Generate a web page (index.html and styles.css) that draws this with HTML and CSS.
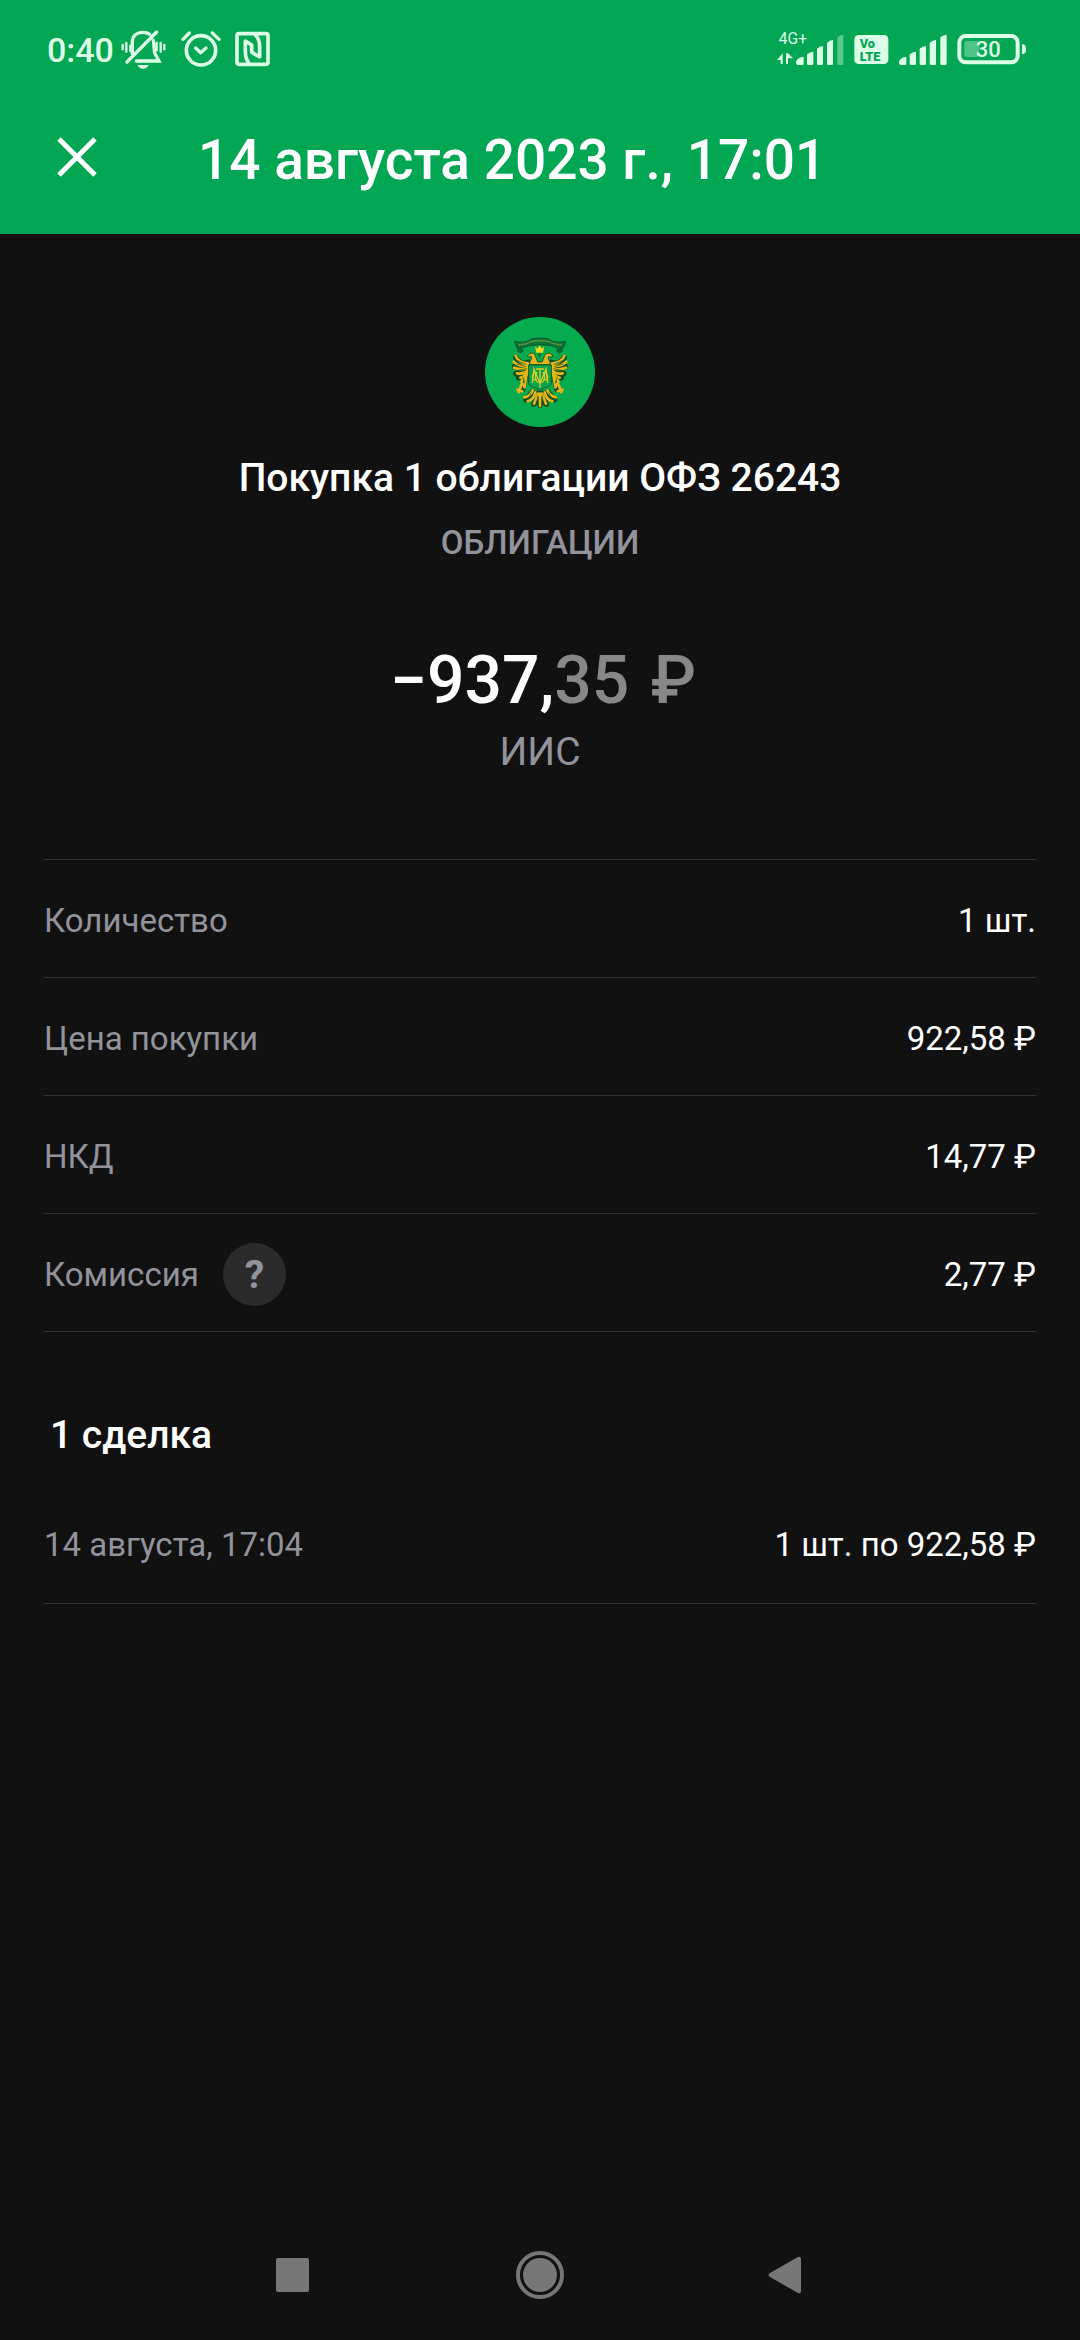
FILE: index.html
```html
<!DOCTYPE html>
<html lang="ru">
<head>
<meta charset="utf-8">
<meta name="viewport" content="width=device-width, initial-scale=1">
<title>Покупка облигации</title>
<link rel="stylesheet" href="styles.css">
</head>
<body>
<header class="top">
  <div class="status">
    <div class="status-side status-left">
      <span class="clock">0:40</span>
      <svg class="icon-bell" viewBox="269 30 141 150" aria-hidden="true" fill="none" stroke="#dcfde6" stroke-width="10" stroke-linecap="round">
        <path d="M306 116V82C306 62 320 52 338 52C346 52 353 54 358 58M369 76C371 84 371 102 373 114L386 138H318M379 51L290 141"/>
        <path d="M277 90V103M288 84V110M300 92V108M379 84V106M391 84V110M402 90V103" stroke-width="7"/>
        <path d="M322 150H355C351 158 345 161 338 161C331 161 325 158 322 150Z" fill="#dcfde6" stroke="none"/>
      </svg>
      <svg class="icon-alarm" viewBox="449 30 120 150" aria-hidden="true" fill="none" stroke="#dcfde6" stroke-linecap="round" stroke-linejoin="round">
        <circle cx="509" cy="106" r="44" stroke-width="11"/>
        <path d="M493 99L508 113L524 99" stroke-width="10"/>
        <path d="M455 73L474 54M563 73L543 54" stroke-width="10" />
      </svg>
      <svg class="icon-nfc" viewBox="614 30 105 150" aria-hidden="true" fill="none" stroke="#dcfde6" stroke-width="11" stroke-linecap="round" stroke-linejoin="round">
        <rect x="620" y="56" width="93" height="92" rx="6"/>
        <path d="M654 141C646 132 645 122 645 108V78L664 90V111"/>
        <path d="M676 61C687 70 688 84 688 98V126L666 113"/>
      </svg>
    </div>
    <div class="status-side status-right">
      <svg class="icon-mobile" viewBox="49 30 204 150" aria-hidden="true" fill="#dcfde6">
        <text class="net-label" x="54" y="87">4G+</text>
        <path d="M66 115V147H60V135H49ZM76 147V115H82L97 130H82V147Z"/>
        <path d="M106 141C108 132 117 126 129 126V146Q129 150 125 150H110Q106 150 106 141ZM139 118Q148 110 158 110V146Q158 150 154 150H143Q139 150 139 146ZM169 101Q177 93 187 93V146Q187 150 183 150H173Q169 150 169 146ZM199 84Q207 75 217 75V146Q217 150 213 150H203Q199 150 199 146Z"/>
        <path d="M230 67Q238 59 248 59V146Q248 150 244 150H234Q230 150 230 146Z" opacity=".4"/>
      </svg>
      <svg class="icon-volte" viewBox="275 30 105 150" aria-hidden="true">
        <rect x="276" y="60" width="102" height="87" rx="13" fill="#dcfde6"/>
        <text class="volte-label" x="292" y="99">Vo</text>
        <text class="volte-label" x="292" y="137">LTE</text>
      </svg>
      <svg class="icon-signal" viewBox="403 30 150 150" aria-hidden="true" fill="#dcfde6">
        <path d="M406 141C408 132 417 126 428 126V146Q428 150 424 150H410Q406 150 406 141ZM438 118Q447 110 457 110V146Q457 150 453 150H442Q438 150 438 146ZM468 101Q476 93 487 93V146Q487 150 483 150H472Q468 150 468 146ZM498 84Q506 75 517 75V146Q517 150 513 150H502Q498 150 498 146ZM530 67Q538 59 549 59V146Q549 150 545 150H534Q530 150 530 146Z"/>
      </svg>
      <svg class="icon-battery" viewBox="589 30 210 150" aria-hidden="true">
        <rect x="596" y="63" width="175" height="79" rx="19" fill="none" stroke="#dcfde6" stroke-width="12"/>
        <rect x="611" y="78" width="44" height="48" rx="7" fill="#dcfde6" opacity=".35"/>
        <path d="M784 88C792 87 796 91 796 103C796 114 792 118 784 117Z" fill="#dcfde6"/>
        <text class="battery-label" x="683" y="127">30</text>
      </svg>
    </div>
  </div>
  <div class="appbar">
    <button class="close" type="button" aria-label="Закрыть">
      <svg viewBox="0 0 40 40" fill="none" stroke="#fff" stroke-width="5" aria-hidden="true"><path d="M2 2L38 38M38 2L2 38"/></svg>
    </button>
    <h1 class="title">14 августа 2023 г., 17:01</h1>
  </div>
</header>

<main class="content">
  <section class="summary">
    <svg class="emblem" viewBox="45 51 330 330" aria-hidden="true">
      <circle cx="210" cy="216" r="165" fill="#06ab50"/>
      <g fill="none" stroke="#124d20" stroke-width="17" stroke-linecap="round">
        <path d="M175 187C160 195 145 185 138 174M244 187C260 195 275 185 282 174"/>
        <path d="M170 196L134 200M170 206L138 221M175 214L146 233M248 196L285 200M248 206L281 221M244 214L273 233"/>
        <path d="M166 228L158 268M253 228L261 268M188 276L168 299M202 280L192 312M210 280V315M218 280L228 312M232 276L253 299"/>
      </g>
      <path d="M134 124C157 128 170 128 186 116Q210 112 234 116C250 128 263 128 287 124L281 143Q264 148 253 140C240 133 180 133 168 140Q156 148 140 143Z" fill="#087638" stroke="#0b5428" stroke-width="3"/>
      <path d="M147 134Q166 134 183 125Q210 120 237 125Q256 134 275 134" fill="none" stroke="#9da739" stroke-width="4" stroke-dasharray="3 2"/>
      <path d="M143 146L160 151L153 160L144 154ZM277 146L260 151L267 160L276 154Z" fill="#087638" stroke="#0b5428" stroke-width="3"/>
      <g fill="none" stroke="#e6b516" stroke-width="8" stroke-linecap="round">
        <path d="M174 190C155 190 143 182 137 168M174 196C156 201 142 195 131 185M174 203C158 211 145 208 132 203M176 210C162 222 150 222 141 220M178 217Q162 232 151 233"/>
        <path d="M245 190C264 190 277 182 283 168M245 196C263 201 278 195 289 185M245 203C261 211 275 208 288 203M244 210C258 222 270 222 278 220M242 217Q258 232 269 233"/>
        <path d="M169 226L164 258M250 226L256 258M164 226L154 246L164 262M255 226L265 246L256 262M156 249L150 264M263 249L270 264"/>
        <path d="M142 269L157 274M151 264L146 277M278 269L263 274M269 264L274 277"/>
        <path d="M188 271Q183 287 163 292M196 277Q192 299 173 304M204 281L192 311M210 281V318M216 281L228 311M224 277Q229 299 247 304M232 271Q238 287 257 292"/>
      </g>
      <path d="M180 194C176 183 187 180 184 170C179 168 174 174 172 169C177 158 191 155 196 167L203 186H216L224 167C230 155 244 158 249 169C247 174 240 168 235 171C233 180 244 183 240 194Z" fill="#e2b31a" stroke="#16592a" stroke-width="3"/>
      <path d="M195 139L202 146L209 136L216 146L223 139L219 158H199Z" fill="#f3d51c"/>
      <path d="M203 160L208 178L215 160Z" fill="#087638"/>
      <g fill="none" stroke="#14602a" stroke-width="2">
        <path d="M139 180L169 194M140 192L168 200M143 211L170 206M282 180L251 194M280 192L252 200M277 211L250 206M184 278L174 298M203 286L201 310M217 286L219 310M236 278L246 298M158 230L164 250M262 230L256 250"/>
      </g>
      <path d="M176 195H244V248C244 261 222 261 210 271C198 261 176 261 176 248Z" fill="#08a34c" stroke="#13612c" stroke-width="3"/>
      <g fill="none" stroke="#d9ce24" stroke-width="4">
        <path d="M187 249L192 207L210 251L228 207L233 249M210 204V263M198 207H222"/>
        <path d="M196 221C184 220 184 240 196 240M224 221C236 220 236 240 224 240M201 216C194 227 195 243 205 248M219 216C226 227 225 243 215 248"/>
      </g>
    </svg>
    <h2 class="name">Покупка 1 облигации ОФЗ 26243</h2>
    <p class="kind">ОБЛИГАЦИИ</p>
    <p class="amount">−937,<span class="cents">35 <span class="currency">₽</span></span></p>
    <p class="account">ИИС</p>
  </section>

  <dl class="rows">
    <div class="row"><dt>Количество</dt><dd>1 шт.</dd></div>
    <div class="row"><dt>Цена покупки</dt><dd>922,58 ₽</dd></div>
    <div class="row"><dt>НКД</dt><dd>14,77 ₽</dd></div>
    <div class="row"><dt>Комиссия <button class="help" type="button" aria-label="Подробнее о комиссии">?</button></dt><dd>2,77 ₽</dd></div>
  </dl>

  <h2 class="deals-title">1 сделка</h2>
  <dl class="deals">
    <div class="row"><dt>14 августа, 17:04</dt><dd>1 шт. по 922,58 ₽</dd></div>
  </dl>
</main>

<nav class="navbar" aria-label="Системная навигация">
  <button type="button" aria-label="Последние приложения"><svg viewBox="0 0 50 50" fill="#777" aria-hidden="true"><rect x="8" y="8" width="33" height="34" rx="2"/></svg></button>
  <button type="button" aria-label="Домой"><svg viewBox="0 0 50 50" fill="#777" aria-hidden="true"><circle cx="25" cy="25" r="17"/><circle cx="25" cy="25" r="22" fill="none" stroke="#777" stroke-width="4"/></svg></button>
  <button type="button" aria-label="Назад"><svg viewBox="0 0 50 50" fill="#777" aria-hidden="true"><path d="M8 23L36 7Q39 6 39 9V41Q39 44 36 43L8 27Q5 25 8 23Z"/></svg></button>
</nav>
</body>
</html>
```
FILE: styles.css
```css
* {
  box-sizing: border-box;
}

body {
  margin: 0;
  min-height: 100vh;
  display: flex;
  flex-direction: column;
  background: #111;
  color: #fff;
  font-family: Roboto, "Noto Sans", sans-serif;
  font-size: 33px;
  line-height: 40px;
}

h1, h2, p, dl, dd {
  margin: 0;
}

button {
  padding: 0;
  border: 0;
  background: none;
  color: inherit;
  font: inherit;
}

svg {
  display: block;
}

.top {
  background: #03a653;
}

.status {
  display: flex;
  justify-content: space-between;
  height: 100px;
  padding: 0 53px 0 47px;
  color: #dcfde6;
}

.status-side {
  display: flex;
  align-items: center;
}

.status-side svg {
  height: 50px;
}

.status-left {
  gap: 14px;
}

.status-right {
  gap: 9px;
}

.clock {
  width: 59px;
  font-size: 34px;
  white-space: nowrap;
  font-weight: 500;
}

.icon-bell { width: 47px; }
.icon-alarm { width: 40px; }
.icon-nfc { width: 35px; }
.icon-mobile { width: 68px; }
.icon-volte { width: 35px; }
.icon-signal { width: 50px; }
.icon-battery { width: 70px; }

.net-label {
  font-size: 47px;
}

.volte-label {
  fill: #03a653;
  font-size: 38px;
  font-weight: 900;
}

.battery-label {
  fill: #dcfde6;
  font-size: 66px;
  font-weight: 500;
  text-anchor: middle;
}

.appbar {
  display: flex;
  align-items: flex-start;
  gap: 91px;
  padding: 20px 47px 34px;
}

.close {
  display: grid;
  place-items: center;
  width: 60px;
  height: 74px;
}

.close svg {
  width: 40px;
}

.title {
  font-size: 55px;
  font-weight: 500;
  line-height: 80px;
}

.content {
  flex: 1;
  padding: 83px 44px 0;
}

.summary {
  display: flex;
  flex-direction: column;
  align-items: center;
  text-align: center;
}

.emblem {
  width: 110px;
  height: 110px;
}

.name {
  margin-top: 26px;
  font-size: 39px;
  font-weight: 500;
  line-height: 50px;
}

.kind {
  margin-top: 20px;
  color: #92939b;
  font-weight: 500;
}

.amount {
  margin-top: 78px;
  padding-left: 6px;
  font-size: 66px;
  font-weight: 500;
  line-height: 80px;
}

.cents {
  color: #888;
}

.currency {
  margin-left: 5px;
}

.account {
  margin-top: 6px;
  color: #92939b;
  font-size: 39px;
  line-height: 50px;
}

.rows {
  margin-top: 82px;
  border-top: 1px solid #303030;
}

.row {
  display: flex;
  align-items: center;
  justify-content: space-between;
  height: 118px;
  padding-top: 4px;
  border-bottom: 1px solid #303030;
}

.row dt {
  display: flex;
  align-items: center;
  gap: 24px;
  color: #92939b;
}

.help {
  width: 63px;
  height: 63px;
  border-radius: 50%;
  background: #2b2b2b;
  font-size: 39px;
  font-weight: 700;
}

.deals-title {
  margin-top: 78px;
  padding-left: 6px;
  font-size: 39px;
  font-weight: 500;
  line-height: 50px;
}

.deals {
  margin-top: 26px;
}

.deals .row {
  padding-top: 0;
}

.navbar {
  display: flex;
  justify-content: center;
  gap: 197px;
  padding: 40px 0;
}

.navbar svg {
  width: 50px;
}
```
